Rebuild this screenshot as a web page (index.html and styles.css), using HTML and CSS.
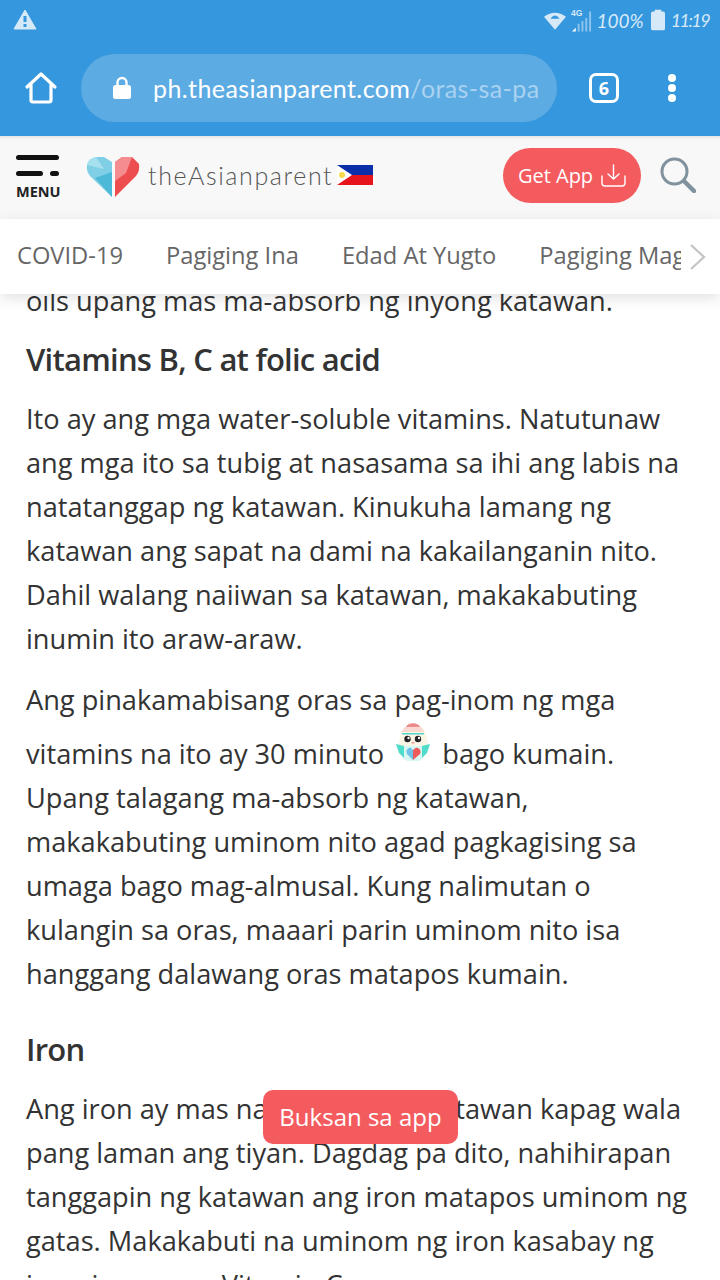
FILE: index.html
```html
<!DOCTYPE html>
<html>
<head>
    <title>Oras sa pag-inom ng vitamins</title>
    <link rel="stylesheet" href="styles.css">
</head>
<body>
    <div class="browser">
        <div class="status-bar">
            <svg class="status-alert" width="24" height="22" viewBox="0 0 24 22">
                <path d="M12 1 L23 20 H1 Z" fill="#d6e9f8" stroke="#d6e9f8" stroke-linejoin="round"/>
                <rect x="10.5" y="7" width="3" height="6" fill="#3597dd"/>
                <rect x="10.5" y="15" width="3" height="3" fill="#3597dd"/>
            </svg>
            <div class="status-right">
                <svg class="status-wifi" width="22" height="19" viewBox="0 0 24 20">
                    <path d="M0 6 Q12 -3 24 6 L12 20 Z" fill="#d6e9f8"/>
                    <path d="M7 8 Q12 1 17 8 Z" fill="#3597dd"/>
                </svg>
                <svg class="status-signal" width="21" height="24" viewBox="0 0 22 24">
                    <text x="0" y="8" class="signal-text">4G</text>
                    <path d="M1 24 L5 20 V24 Z" fill="#fff"/>
                    <path d="M7 24 V16 H9 V24 Z M11 24 V13 H13 V24 Z M15 24 V10 H17 V24 Z M19 24 V3 H21 V24 Z" fill="#8fc4ec"/>
                </svg>
                <span class="status-text">100%</span>
                <svg class="status-battery" width="14" height="22" viewBox="0 0 15 22">
                    <rect x="4" y="0" width="7" height="3" fill="#d6e9f8"/>
                    <rect x="0" y="2" width="15" height="20" rx="2" fill="#d6e9f8"/>
                </svg>
                <span class="status-text status-time">11:19</span>
            </div>
        </div>
        <div class="toolbar">
            <svg class="toolbar-home" width="34" height="34" viewBox="0 0 34 34">
                <path d="M3 16 L17 3 L31 16 M7 13 V29 Q7 31 9 31 H25 Q27 31 27 29 V13" fill="none" stroke="#fff" stroke-width="3.2" stroke-linecap="round" stroke-linejoin="round"/>
            </svg>
            <div class="url-bar">
                <svg width="20" height="24" viewBox="0 0 20 24">
                    <path d="M5.5 10 V6.5 A4.5 4.5 0 0 1 14.5 6.5 V10" fill="none" stroke="#fff" stroke-width="2.4"/>
                    <rect x="1" y="9" width="18" height="14" rx="2.5" fill="#fff"/>
                </svg>
                <span class="url-text">ph.theasianparent.com<span class="url-path">/oras-sa-pa</span></span>
            </div>
            <div class="tab-count">6</div>
            <div class="toolbar-dots"><i></i><i></i><i></i></div>
        </div>
    </div>

    <header class="site-header">
        <div class="menu-btn">
            <span class="menu-line"></span>
            <span class="menu-row"><span class="menu-short"></span><span class="menu-dot"></span></span>
            <span class="menu-label">MENU</span>
        </div>
        <svg class="logo-heart" width="54" height="40" viewBox="0 0 54 40">
            <path d="M26 40 L4 19 Q0 14 1 8 Q3 1 10 0 H18 L26 5 Z" fill="#7fd0e6"/>
            <path d="M26 40 L9 21 L26 15 Z" fill="#4db9d8"/>
            <path d="M1 8 Q3 1 10 0 L18 12 Z" fill="#a6e0ee"/>
            <path d="M29 40 V5 L36 0 H46 L53 7 Q54 14 50 19 Z" fill="#ee4d4f"/>
            <path d="M29 5 L36 0 H46 L40 16 L29 24 Z" fill="#f58d90"/>
        </svg>
        <span class="logo-text">theAsianparent</span>
        <svg class="logo-flag" width="36" height="20" viewBox="0 0 36 20">
            <rect width="36" height="10" fill="#0b2fa8"/>
            <rect y="10" width="36" height="10" fill="#e8141c"/>
            <path d="M0 0 L15 10 L0 20 Z" fill="#fff"/>
            <circle cx="5" cy="10" r="3" fill="#f6d94a"/>
        </svg>
        <div class="get-app">
            <span>Get App</span>
            <svg width="25" height="23" viewBox="0 0 25 23">
                <path d="M12.5 1 V15 M7 10 L12.5 15 L18 10 M1 12 V19 Q1 22 4 22 H21 Q24 22 24 19 V12" fill="none" stroke="#fff" stroke-width="1.400" stroke-linecap="round" stroke-linejoin="round"/>
            </svg>
        </div>
        <svg class="search-icon" width="36" height="36" viewBox="0 0 36 36">
            <circle cx="14.500" cy="14.500" r="12.500" fill="none" stroke="#7f929e" stroke-width="3"/>
            <path d="M24 24 L34 34" stroke="#7f929e" stroke-width="4.500" stroke-linecap="round"/>
        </svg>
    </header>

    <nav class="cat-nav">
        <div class="cat-list">
            <span>COVID-19</span>
            <span>Pagiging Ina</span>
            <span>Edad At Yugto</span>
            <span>Pagiging Magulang</span>
        </div>
        <svg class="cat-arrow" width="18" height="28" viewBox="0 0 18 28">
            <path d="M2 2 L15 14 L2 26" fill="none" stroke="#c4c4c4" stroke-width="2.200"/>
        </svg>
    </nav>

    <main class="page-body">
        <article class="article">
            <p class="first">oils upang mas ma-absorb ng inyong katawan.</p>
            <h2>Vitamins B, C at folic acid</h2>
            <p>Ito ay ang mga water-soluble vitamins. Natutunaw ang mga ito sa tubig at nasasama sa ihi ang labis na natatanggap ng katawan. Kinukuha lamang ng katawan ang sapat na dami na kakailanganin nito. Dahil walang naiiwan sa katawan, makakabuting inumin ito araw-araw.</p>
            <p>Ang pinakamabisang oras sa pag-inom ng mga vitamins na ito ay 30 minuto
                <svg class="egg" width="36" height="42" viewBox="0 0 36 42">
                    <path d="M18 1 C26 1 33 12 33 24 C33 33 26 39 18 39 C10 39 4 33 4 24 C4 12 10 1 18 1 Z" fill="#fbf5e6"/>
                    <path d="M11 5 C13 0 23 0 25 5 Z" fill="#ec8a8c"/>
                    <path d="M10 5 H26 L30 10 H6 Z" fill="#f9d9d2"/>
                    <rect x="7" y="11" width="22" height="1.500" fill="#4fd8c8"/>
                    <circle cx="12.500" cy="17" r="3.200" fill="#222"/>
                    <circle cx="23" cy="17" r="3.200" fill="#222"/>
                    <circle cx="13.500" cy="16" r="1.200" fill="#fff"/>
                    <circle cx="24" cy="16" r="1.200" fill="#fff"/>
                    <rect x="16.500" y="20" width="3" height="1.500" fill="#ef9a9a"/>
                    <path d="M8 24 H28 L28 36 L24 39 H12 L8 36 Z" fill="#d9f7f2"/>
                    <path d="M1 22 L9 24 V36 L4 31 Z" fill="#4fdcca"/>
                    <path d="M35 22 L27 24 V36 L32 31 Z" fill="#4fdcca"/>
                    <path d="M18 38 L12 32 C10 28 14 25 16 26 L18 28 Z" fill="#6fc3e8"/>
                    <path d="M18 38 L25 32 C27 28 23 25 20.500 26 L18 28 Z" fill="#ee5a5c"/>
                </svg>
                bago kumain. Upang talagang ma-absorb ng katawan, makakabuting uminom nito agad pagkagising sa umaga bago mag-almusal. Kung nalimutan o kulangin sa oras, maaari parin uminom nito isa hanggang dalawang oras matapos kumain.</p>
            <h2 class="spaced">Iron</h2>
            <p>Ang iron ay mas na-aabsorb ng katawan kapag wala pang laman ang tiyan. Dagdag pa dito, nahihirapan tanggapin ng katawan ang iron matapos uminom ng gatas. Makakabuti na uminom ng iron kasabay ng inumin na may Vitamin C.</p>
        </article>
    </main>

    <div class="open-app">Buksan sa app</div>
</body>
</html>
```
FILE: styles.css
```css
html, body {
    margin: 0;
    height: 1280px;
    overflow: hidden;
}

body {
    font-family: "Open Sans", sans-serif;
    background-color: #fff;
    color: #333;
    display: flex;
    flex-direction: column;
    position: relative;
}

/* browser chrome */
.browser {
    height: 136px;
    background-color: #3597dd;
    flex: none;
}

.status-bar {
    height: 40px;
    padding: 0 11px 0 13px;
    display: flex;
    justify-content: space-between;
    align-items: center;
}

.status-right {
    display: flex;
    align-items: center;
    gap: 5px;
}

.status-text {
    font-family: "Lato", sans-serif;
    font-style: italic;
    font-size: 19px;
    color: #d6e9f8;
}

.status-battery {
    margin-left: 2px;
}

.status-time {
    margin-left: 1px;
    font-size: 18px;
    letter-spacing: -1.6px;
}

.signal-text {
    font-family: "Liberation Sans", sans-serif;
    font-size: 9px;
    font-weight: bold;
    fill: #d6e9f8;
}

.toolbar {
    height: 68px;
    margin-top: 14px;
    display: flex;
    align-items: center;
}

.toolbar-home {
    margin-left: 24px;
}

.url-bar {
    width: 476px;
    height: 68px;
    margin-left: 23px;
    padding-left: 31px;
    box-sizing: border-box;
    border-radius: 34px;
    background-color: #5dabe3;
    display: flex;
    align-items: center;
    gap: 21px;
}

.url-text {
    font-family: "Lato", sans-serif;
    font-size: 25px;
    letter-spacing: 0.4px;
    color: #fff;
    white-space: nowrap;
    width: 388px;
    overflow: hidden;
}

.url-path {
    color: #a9d2f0;
}

.tab-count {
    width: 24px;
    height: 24px;
    margin-left: 32px;
    border: 3px solid #fff;
    border-radius: 7px;
    color: #fff;
    font-size: 18px;
    font-weight: bold;
    text-align: center;
    line-height: 24px;
}

.toolbar-dots {
    margin-left: 49px;
    display: flex;
    flex-direction: column;
    gap: 2px;
}

.toolbar-dots i {
    display: block;
    width: 8px;
    height: 8px;
    border-radius: 50%;
    background-color: #fff;
}

/* site header */
.site-header {
    height: 78px;
    padding-bottom: 5px;
    flex: none;
    background-color: #f8f8f8;
    display: flex;
    align-items: center;
    box-shadow: inset 0 4px 4px -3px #ddd;
}

.menu-btn {
    width: 44px;
    margin-left: 16px;
    margin-top: 6px;
    display: flex;
    flex-direction: column;
}

.menu-line {
    height: 5px;
    width: 43px;
    border-radius: 3px;
    background-color: #111;
}

.menu-row {
    display: flex;
    justify-content: space-between;
    width: 43px;
    margin-top: 11px;
}

.menu-short {
    width: 27px;
    height: 5px;
    border-radius: 3px;
    background-color: #111;
}

.menu-dot {
    width: 9px;
    height: 5px;
    border-radius: 3px;
    background-color: #111;
}

.menu-label {
    margin-top: 6px;
    font-size: 14.5px;
    font-weight: bold;
    line-height: 19px;
    color: #222;
}

.logo-heart {
    margin-left: 26px;
    margin-top: 4px;
}

.logo-text {
    font-family: "Lato", sans-serif;
    font-size: 25px;
    font-weight: 300;
    letter-spacing: 1.6px;
    color: #555;
    margin-left: 8px;
}

.logo-flag {
    margin-left: 4px;
}

.get-app {
    width: 138px;
    height: 55px;
    margin-left: auto;
    border-radius: 28px;
    background-color: #f45b5f;
    color: #fff;
    font-size: 20px;
    display: flex;
    align-items: center;
    justify-content: center;
    gap: 8px;
}

.search-icon {
    margin-left: 19px;
    margin-right: 24px;
}

/* category nav */
.cat-nav {
    height: 71px;
    padding-bottom: 4px;
    flex: none;
    background-color: #fff;
    display: flex;
    align-items: center;
    position: relative;
    z-index: 1;
    box-shadow: 0 4px 14px rgba(0, 0, 0, 0.12);
}

.cat-list {
    width: 681px;
    padding-left: 17px;
    box-sizing: border-box;
    display: flex;
    gap: 43px;
    overflow: hidden;
    white-space: nowrap;
    font-size: 23.7px;
    color: #666;
}

.cat-arrow {
    margin-left: 8px;
    margin-top: 4px;
}

/* article */
.page-body {
    flex: 1;
    overflow: hidden;
}

.article {
    margin-top: -15px;
    padding: 0 26px;
    font-size: 27.2px;
    line-height: 44px;
    color: #333;
}

.article p {
    margin: 0 0 17px;
}

.article p.first {
    margin-bottom: 14px;
}

.article h2 {
    margin: 0 0 16px;
    font-size: 31px;
    font-weight: 600;
    letter-spacing: -0.75px;
    line-height: 44px;
}

.article h2.spaced {
    margin-top: 31px;
}

.egg {
    margin: 0 4px;
}

.open-app {
    position: absolute;
    left: 263px;
    top: 1090px;
    width: 195px;
    height: 54px;
    border-radius: 10px;
    background-color: #f45b5f;
    color: #fff;
    font-size: 24px;
    line-height: 54px;
    text-align: center;
}
```
